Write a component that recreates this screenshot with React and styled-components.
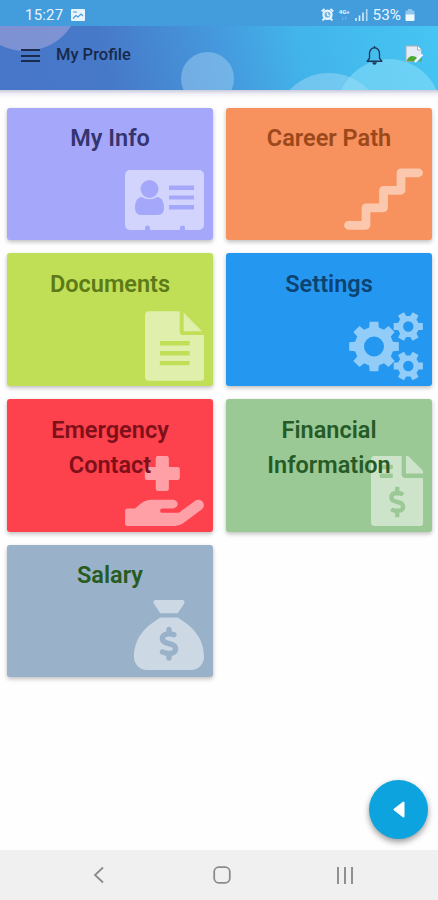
import styled, { createGlobalStyle } from "styled-components"
import { FaFileInvoiceDollar, FaHandHoldingMedical } from "react-icons/fa"
import { FaSackDollar, FaStairs } from "react-icons/fa6"

const cards = [
    { title: "My Info", background: "#a5a8fa", color: "#34346f", icon: <AddressCard />, width: 79, lift: 10 },
    { title: "Career Path", background: "#f7915d", color: "#9b481b", icon: <FaStairs />, width: 79, lift: 6 },
    { title: "Documents", background: "#c0df56", color: "#5d7a18", icon: <TextFile />, width: 59.5, lift: 5 },
    { title: "Settings", background: "#2498f1", color: "#0c4373", icon: <Gears />, width: 75, lift: 5 },
    { title: "Emergency Contact", background: "#fd414d", color: "#7e1019", icon: <FaHandHoldingMedical />, width: 79, lift: 6 },
    { title: "Financial Information", background: "#9bc995", color: "#265b28", icon: <FaFileInvoiceDollar />, width: 52.5, lift: 6 },
    { title: "Salary", background: "#99b2c9", color: "#285b20", icon: <FaSackDollar />, width: 70, lift: 7 },
]

export default function App() {
    return (
        <Screen>
            <GlobalStyle />
            <StatusBar>
                <Clock>15:27</Clock>
                <PictureIcon />
                <StatusIcons>
                    <AlarmIcon />
                    <Network>4G+<small>↓↑</small></Network>
                    <SignalIcon />
                    <Percent>53%</Percent>
                    <BatteryIcon />
                </StatusIcons>
            </StatusBar>
            <Header>
                <Bubble $size={110} $x={-30} $y={-85} $color="rgba(190, 180, 225, 0.45)" />
                <Bubble $size={53} $x={181} $y={26} $color="rgba(160, 205, 240, 0.5)" />
                <Bubble $size={108} $x={275} $y={47} $color="rgba(160, 215, 245, 0.5)" />
                <Bubble $size={104} $x={337} $y={33} $color="rgba(145, 225, 250, 0.5)" />
                <MenuButton><i /><i /><i /></MenuButton>
                <PageTitle>My Profile</PageTitle>
                <BellIcon />
                <Avatar><BrokenImage /></Avatar>
            </Header>
            <Cards>
                {cards.map((card) => (
                    <Card key={card.title} $background={card.background} $color={card.color}>
                        <CardIcon $width={card.width} $lift={card.lift}>{card.icon}</CardIcon>
                        <CardTitle>{card.title}</CardTitle>
                    </Card>
                ))}
            </Cards>
            <FloatingButton>
                <svg width="12" height="17" viewBox="0 0 12 17">
                    <path d="M10.5 1.5v14L1.5 8.5z" fill="#fff" stroke="#fff" strokeWidth="2" strokeLinejoin="round" />
                </svg>
            </FloatingButton>
            <NavBar>
                <NavItem>
                    <svg width="12" height="18" viewBox="0 0 12 18">
                        <path d="M10 1.5 2 9l8 7.5" fill="none" stroke="#8b8b8b" strokeWidth="1.8" />
                    </svg>
                </NavItem>
                <NavItem>
                    <svg width="18" height="18" viewBox="0 0 18 18">
                        <rect x="1.2" y="1.2" width="15.6" height="15.6" rx="4.5" fill="none" stroke="#8b8b8b" strokeWidth="1.8" />
                    </svg>
                </NavItem>
                <NavItem>
                    <svg width="18" height="17" viewBox="0 0 18 17">
                        <path d="M2 0v17M9 0v17M16 0v17" stroke="#8b8b8b" strokeWidth="1.9" />
                    </svg>
                </NavItem>
            </NavBar>
        </Screen>
    )
}

function AddressCard() {
    return (
        <svg height="60" viewBox="0 0 79 60" fill="currentColor">
            <path
                fillRule="evenodd"
                d="M5 0h69a5 5 0 0 1 5 5v50a5 5 0 0 1-5 5H60v-2a2.5 2.5 0 0 0-5 0v2H25v-2a2.5 2.5 0 0 0-5 0v2H5a5 5 0 0 1-5-5V5a5 5 0 0 1 5-5zM24.500 10a9 9 0 1 0 0 18a9 9 0 1 0 0-18zM17 27c-5 0-7 5-7 11 0 4 2 7 6 7h17c4 0 6-3 6-7 0-6-2-11-7-11-4 3-11 3-15 0zM44 15.500v4.500h25v-4.500zM44 25.500v4h25v-4zM44 35v4.500h25v-4.500z"
            />
        </svg>
    )
}

function TextFile() {
    return (
        <svg height="70" viewBox="0 0 60 70" fill="currentColor">
            <path d="M39 1.500 57.500 20H39z" />
            <path
                fillRule="evenodd"
                d="M4 0h31v20a4 4 0 0 0 4 4h21v42a4 4 0 0 1-4 4H4a4 4 0 0 1-4-4V4a4 4 0 0 1 4-4zM15 30v4.500h30v-4.500zM15 40v4.500h30v-4.500zM15 50v4.500h30v-4.500z"
            />
        </svg>
    )
}

// outline of a gear with its round hole, for fill-rule evenodd
function gearPath(cx, cy, outer, inner, hole, teeth, turn = 0) {
    const step = (Math.PI * 2) / teeth
    const points = []
    for (let i = 0; i < teeth; i++) {
        const a = i * step + turn
        const corners = [[inner, -0.32], [outer, -0.22], [outer, 0.22], [inner, 0.32]]
        corners.forEach(([r, t]) => {
            points.push(`${(cx + r * Math.sin(a + t * step)).toFixed(2)} ${(cy - r * Math.cos(a + t * step)).toFixed(2)}`)
        })
    }
    return `M${points.join("L")}ZM${cx - hole} ${cy}a${hole} ${hole} 0 1 0 ${hole * 2} 0a${hole} ${hole} 0 1 0 ${-hole * 2} 0Z`
}

function Gears() {
    return (
        <svg height="69" viewBox="0 0 75 69" fill="currentColor" fillRule="evenodd">
            <path d={gearPath(26, 34.5, 25.2, 19.5, 10, 8)} />
            <path d={gearPath(60.3, 14.5, 15, 10.8, 5.2, 6, Math.PI / 6)} />
            <path d={gearPath(60.3, 54, 15, 10.8, 5.2, 6, Math.PI / 6)} />
        </svg>
    )
}

function PictureIcon() {
    return (
        <svg width="14" height="12" viewBox="0 0 14 12">
            <rect width="14" height="12" rx="1" fill="#e9f5fd" />
            <path d="M2 9.500 5 6.500l2 1.500 3-3 2 2M2 3h4" fill="none" stroke="#439ddd" strokeWidth="1.100" />
        </svg>
    )
}

function AlarmIcon() {
    return (
        <svg width="13" height="13" viewBox="0 0 13 13">
            <circle cx="6.500" cy="6.800" r="5.200" fill="#e9f5fd" />
            <path d="M.8 3.500 3.500 1M12.200 3.500 9.500 1M1.500 12.500l2-2M11.500 12.500l-2-2" stroke="#e9f5fd" strokeWidth="1.800" />
            <circle cx="6.500" cy="6.800" r="3" fill="#6fb5e6" />
            <path d="M6.500 4.500V7l2 1" fill="none" stroke="#e9f5fd" strokeWidth="1.300" />
        </svg>
    )
}

function SignalIcon() {
    return (
        <svg width="13" height="12" viewBox="0 0 13 12">
            <path d="M1 9v3M4.500 6.500V12M8 3.500V12" stroke="#d8edfa" strokeWidth="1.600" />
            <path d="M11.700 0v12" stroke="#b4daf3" strokeWidth="1.600" />
        </svg>
    )
}

function BatteryIcon() {
    return (
        <svg width="10" height="12" viewBox="0 0 10 12">
            <path d="M3 0h4v1.500h1.500q1 0 1 1V6h-9V2.500q0-1 1-1H3z" fill="#8fc6ed" />
            <path d="M.5 5.500h9V11q0 1-1 1h-7q-1 0-1-1z" fill="#eef8ff" />
        </svg>
    )
}

function BellIcon() {
    return (
        <Bell width="17" height="20" viewBox="0 0 18 20" preserveAspectRatio="none">
            <path
                d="M9 1v1.700M1.200 16.300h15.600l-2.500-3V8.500C14.300 5 11.500 2.700 9 2.700S3.700 5 3.700 8.500v4.800z"
                fill="none"
                stroke="#1b3858"
                strokeWidth="1.400"
                strokeLinejoin="round"
            />
            <path d="M6.500 17.200h5Q11 19.800 9 19.800T6.500 17.200z" fill="#1b3858" />
        </Bell>
    )
}

function BrokenImage() {
    return (
        <svg width="18" height="18" viewBox="0 0 18 18">
            <path d="M1 1h11.500L16.500 5v6L11 16.500H1z" fill="#e4ecf8" stroke="#a9b0b8" />
            <path d="M12.500 1v4h4" fill="#fff" stroke="#a9b0b8" />
            <path d="M1.500 16q2-5 6-5 3 0 4.500 2l-3.500 3.500z" fill="#4fa735" />
            <path d="M13 16.500 17 12.500v4z" fill="#5fae48" />
            <path d="M10 17 17.500 9.500" stroke="#f4fbff" strokeWidth="1.800" />
        </svg>
    )
}

const GlobalStyle = createGlobalStyle`
    body {
        margin: 0;
        background: #fff;
        font-family: Roboto, "Liberation Sans", sans-serif;
    }
`

const Screen = styled.div`
    position: relative;
    width: 438px;
    height: 900px;
    display: flex;
    flex-direction: column;
    overflow: hidden;
    background: #fefefe;
`

const StatusBar = styled.div`
    height: 26px;
    flex: none;
    padding: 3px 23px 0 25px;
    display: flex;
    align-items: center;
    box-sizing: border-box;
    background: #439ddd;
    color: #e9f5fd;
`

const Clock = styled.span`
    width: 38px;
    margin-right: 8px;
    font-size: 15px;
    letter-spacing: 0.2px;
`

const StatusIcons = styled.div`
    margin-left: auto;
    display: flex;
    align-items: center;
`

const Network = styled.span`
    width: 13px;
    margin: 0 4px;
    font-size: 6px;
    font-weight: 700;
    line-height: 6px;
    text-align: center;

    small {
        display: block;
        font-size: 6px;
        opacity: 0.6;
    }
`

const Percent = styled.span`
    margin: 0 4px 0 5px;
    font-size: 15.3px;
`

const Header = styled.header`
    position: relative;
    height: 64px;
    flex: none;
    padding: 0 13px 6px 21px;
    display: flex;
    align-items: center;
    box-sizing: border-box;
    background: linear-gradient(75deg, #4876c8 0%, #4779c9 25%, #4598dd 50%, #42b4ea 68%, #46c5f3 100%);
    overflow: hidden;
`

const Bubble = styled.span`
    position: absolute;
    left: ${(props) => props.$x}px;
    top: ${(props) => props.$y}px;
    width: ${(props) => props.$size}px;
    height: ${(props) => props.$size}px;
    border-radius: 50%;
    background: ${(props) => props.$color};
`

const MenuButton = styled.div`
    position: relative;
    width: 19px;
    margin-top: 1px;
    display: grid;
    gap: 3.5px;

    i {
        height: 2px;
        background: #1a2b4b;
    }
`

const PageTitle = styled.h1`
    position: relative;
    margin: 0 auto 2px 16px;
    font-size: 16.5px;
    font-weight: 500;
    color: #17294a;
`

const Bell = styled.svg`
    position: relative;
    margin-right: 22px;
`

const Avatar = styled.div`
    position: relative;
    width: 20px;
    height: 20px;
    display: flex;
`

const Cards = styled.main`
    flex: 1;
    padding: 17.5px 6px 0 7px;
    display: grid;
    grid-template-columns: 1fr 1fr;
    grid-auto-rows: 132.5px;
    gap: 13.3px 13px;
    background: linear-gradient(#c9cbdc, #f0f0f6 4px, #fefefe 8px);
`

const Card = styled.section`
    position: relative;
    padding: 13.5px 30px 0;
    border-radius: 3px;
    background: ${(props) => props.$background};
    color: ${(props) => props.$color};
    box-shadow: 0 2px 4px rgba(0, 0, 0, 0.25);
`

const CardTitle = styled.h2`
    position: relative;
    margin: 0;
    font-size: 23.5px;
    font-weight: 600;
    line-height: 35.5px;
    text-align: center;
`

const CardIcon = styled.div`
    position: absolute;
    right: 9px;
    bottom: ${(props) => props.$lift}px;
    display: flex;
    color: rgba(255, 255, 255, 0.5);
    font-size: 70px;

    svg {
        width: ${(props) => props.$width}px;
    }
`

const FloatingButton = styled.button`
    position: absolute;
    right: 10px;
    bottom: 61px;
    width: 59px;
    height: 59px;
    padding: 0 0 0 1px;
    display: flex;
    align-items: center;
    justify-content: center;
    border: 0;
    border-radius: 50%;
    background: #0ca3df;
    box-shadow: 0 3px 6px rgba(0, 0, 0, 0.4);
`

const NavBar = styled.nav`
    height: 50px;
    flex: none;
    padding: 0 32px 0 37px;
    display: flex;
    align-items: center;
    background: #f0f0f0;
`

const NavItem = styled.div`
    flex: 1;
    display: flex;
    justify-content: center;
`
